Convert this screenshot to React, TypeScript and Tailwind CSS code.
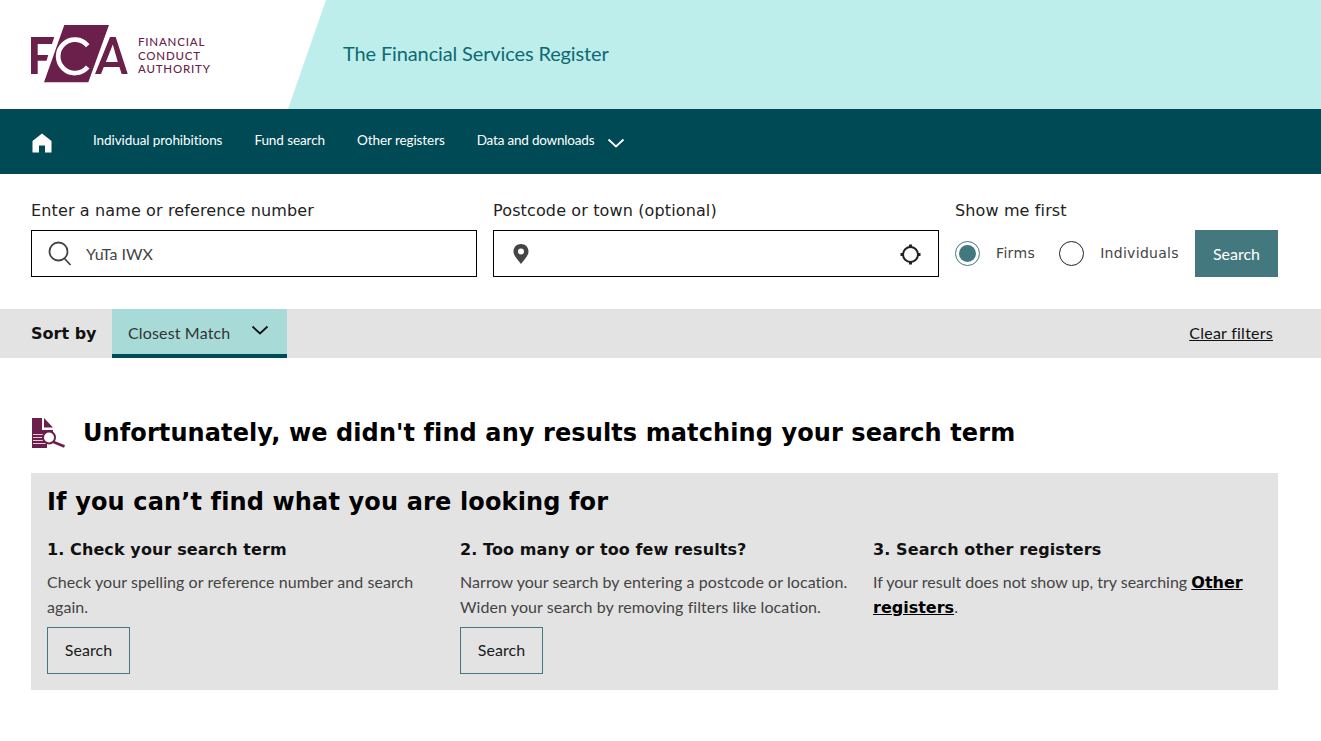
import React from "react";

const LATO = "font-['Lato',sans-serif]";
const VERDANA = "font-['DejaVu_Sans',sans-serif]";

const FcaLogo = () => (
  <svg width="100" height="60" viewBox="0 0 100 60" className="shrink-0 mt-[1px]">
    <path d="M0 12H23.3L21 19H6.7V30H17.3L15.5 35.7H6.7V49H0Z" fill="#6b1f4b" />
    <path d="M33.3 0H78L57.3 57.3H13Z" fill="#6b1f4b" />
    <path d="M56.7 20.7A16.7 16.7 0 1 0 56.7 42" fill="none" stroke="#fff" strokeWidth="4.7" />
    <path
      d="M79 12H84.7L96.7 49H90.7L88.4 42H72.8L70 49H64ZM81.8 19.5L74.9 37H86.8Z"
      fill="#6b1f4b"
      fillRule="evenodd"
    />
  </svg>
);

const Chevron = ({ className }: { className: string }) => (
  <svg width="18" height="10" viewBox="0 0 18 10" fill="none" stroke="currentColor" strokeWidth="1.8" className={className}>
    <path d="M1.5 1.5L9 8.5L16.5 1.5" />
  </svg>
);

const NavLink = ({ children, tight }: { children: React.ReactNode; tight?: boolean }) => (
  <a className={`text-[13.5px] text-white mb-[2px] ${tight ? "tracking-[-0.2px]" : "tracking-[-0.08px]"}`}>
    {children}
  </a>
);

const HelpButton = () => (
  <button className={`w-[83px] h-[47px] border border-[#44787f] pb-[2px] text-[16px] text-[#1a1a1a] ${LATO}`}>
    Search
  </button>
);

const FieldLabel = ({ children }: { children: React.ReactNode }) => (
  <label className={`block text-[16px] leading-[20px] tracking-[0.13px] text-[#222] mb-[9px] ${VERDANA}`}>
    {children}
  </label>
);

const StepTitle = ({ children }: { children: React.ReactNode }) => (
  <h3 className={`text-[16px] leading-[24px] tracking-[0.1px] font-bold text-[#111] mb-[7px] ${VERDANA}`}>
    {children}
  </h3>
);

export default function App() {
  return (
    <div className={`w-full min-h-[741px] bg-white ${LATO}`}>
      <header className="h-[109px] bg-[#bdeeec] flex items-center">
        <div className="w-[326px] h-full bg-white [clip-path:polygon(0_0,100%_0,288px_100%,0_100%)] flex items-center pl-[31px] gap-[7px]">
          <FcaLogo />
          <div className="text-[11.5px] font-medium leading-[13.5px] tracking-[0.8px] text-[#6b1f4b] mt-[2px]">
            <div>FINANCIAL</div>
            <div>CONDUCT</div>
            <div>AUTHORITY</div>
          </div>
        </div>
        <div className="pl-[17px] mb-[4px] text-[20px] tracking-[-0.13px] text-[#0e6a6f]">
          The Financial Services Register
        </div>
      </header>

      <nav className="h-[65px] bg-[#004a56] flex items-center pl-[32px]">
        <svg width="20" height="20" viewBox="0 0 20 20" fill="#fff" className="mr-[41px] mt-[2px]">
          <path d="M10 0.5L19.5 8V19.5H13V12.5H7V19.5H0.5V8Z" />
        </svg>
        <div className="flex items-center gap-[32px]">
          <NavLink>Individual prohibitions</NavLink>
          <NavLink>Fund search</NavLink>
          <NavLink>Other registers</NavLink>
          <div className="flex items-center gap-[13px]">
            <NavLink tight>Data and downloads</NavLink>
            <Chevron className="text-white mt-[2px]" />
          </div>
        </div>
      </nav>

      <section className="h-[135px] pl-[31px] pr-[43px] pt-[27px] flex gap-[16px]">
        <div className="w-[446px]">
          <FieldLabel>Enter a name or reference number</FieldLabel>
          <div className="h-[47px] border border-black flex items-center pl-[16px]">
            <svg width="24" height="25" viewBox="0 0 24 25" fill="none" stroke="#444" strokeWidth="1.8" className="shrink-0">
              <circle cx="10.5" cy="10.5" r="9" />
              <path d="M16.5 17.5L22.5 24" />
            </svg>
            <span className="ml-[14px] text-[16px] text-[#444]">YuTa IWX</span>
          </div>
        </div>
        <div className="w-[446px]">
          <FieldLabel>Postcode or town (optional)</FieldLabel>
          <div className="h-[47px] border border-black flex items-center justify-between pl-[19px] pr-[17px]">
            <svg width="16" height="20" viewBox="0 0 16 20" fill="#444" fillRule="evenodd">
              <path d="M8 0C3.6 0 0.5 3.2 0.5 7.4C0.5 12 5 15.5 8 20C11 15.5 15.5 12 15.5 7.4C15.5 3.2 12.4 0 8 0ZM8 4.6A3 3 0 1 1 8 10.6A3 3 0 1 1 8 4.6Z" />
            </svg>
            <svg width="21" height="21" viewBox="0 0 21 21" fill="none" stroke="#222" className="mt-[1px]">
              <circle cx="10.5" cy="10.5" r="7.5" strokeWidth="2" />
              <path d="M10.5 0.5V3.5M10.5 17.5V20.5M0.5 10.5H3.5M17.5 10.5H20.5" strokeWidth="3" />
            </svg>
          </div>
        </div>
        <div className="flex-1">
          <FieldLabel>Show me first</FieldLabel>
          <div className="flex items-center h-[47px]">
            <span className="w-[25px] h-[25px] rounded-full border border-[#44787f] flex items-center justify-center mb-[1px]">
              <span className="w-[17px] h-[17px] rounded-full bg-[#44787f]" />
            </span>
            <span className={`ml-[16px] text-[14px] text-[#444] tracking-[0.35px] mb-[1px] ${VERDANA}`}>Firms</span>
            <span className="ml-[24px] w-[25px] h-[25px] rounded-full border border-[#222] mb-[1px]" />
            <span className={`ml-[16px] text-[14px] text-[#444] tracking-[0.3px] mb-[1px] ${VERDANA}`}>Individuals</span>
            <button className="ml-auto w-[83px] h-[47px] bg-[#44787f] text-white text-[16px]">Search</button>
          </div>
        </div>
      </section>

      <section className="h-[49px] bg-[#e3e3e3] flex items-center pl-[31px] pr-[48px]">
        <span className={`text-[16px] font-bold text-[#111] w-[81px] ${VERDANA}`}>Sort by</span>
        <div className="w-[175px] h-full bg-[#a8dbd8] border-b-4 border-[#004a56] flex items-center justify-between pl-[16px] pr-[18px]">
          <span className="text-[16px] tracking-[0.15px] text-[#333] mt-[2px]">Closest Match</span>
          <Chevron className="text-[#111] mb-[3px]" />
        </div>
        <a className="ml-auto mb-[2px] text-[16px] tracking-[0.25px] text-[#111] underline">Clear filters</a>
      </section>

      <section className="pt-[60px] pl-[31px] w-[1278px]">
        <div className="flex items-center h-[30px] pl-[1px] gap-[18px]">
          <svg width="33" height="30" viewBox="0 0 33 30" className="shrink-0">
            <path d="M0 0H10V12H21V14H0Z" fill="#6b1f4b" />
            <path d="M12 0L21 9.5H12Z" fill="#6b1f4b" />
            <rect x="0" y="14" width="15" height="16" fill="#6b1f4b" />
            <path d="M1 16.5H14M1 19.5H14M1 22.5H14M1 25.5H14" stroke="#e8c9da" strokeWidth="1" />
            <circle cx="17" cy="19.5" r="6" fill="#fff" stroke="#6b1f4b" strokeWidth="2" />
            <path d="M21.5 24L32.5 28.5" stroke="#6b1f4b" strokeWidth="2.5" />
          </svg>
          <h1 className={`text-[24px] tracking-[0.1px] font-bold text-black ${VERDANA}`}>
            Unfortunately, we didn't find any results matching your search term
          </h1>
        </div>

        <div className="mt-[25px] h-[217px] bg-[#e3e3e3] px-[16px] pt-[12px]">
          <h2 className={`text-[24px] tracking-[0.14px] leading-[34px] font-bold text-black ${VERDANA}`}>
            If you can’t find what you are looking for
          </h2>
          <div className="grid grid-cols-[413px_413px_1fr] mt-[19px] text-[16px] tracking-[0.07px] leading-[25px] text-[#444]">
            <div>
              <StepTitle>1. Check your search term</StepTitle>
              <p>Check your spelling or reference number and search<br />again.</p>
              <div className="mt-[8px]"><HelpButton /></div>
            </div>
            <div>
              <StepTitle>2. Too many or too few results?</StepTitle>
              <p>Narrow your search by entering a postcode or location.<br />Widen your search by removing filters like location.</p>
              <div className="mt-[8px]"><HelpButton /></div>
            </div>
            <div>
              <StepTitle>3. Search other registers</StepTitle>
              <p className="tracking-normal">
                If your result does not show up, try searching{" "}
                <a className={`text-[16px] leading-[20px] font-bold text-black underline ${VERDANA}`}>Other<br />registers</a>.
              </p>
            </div>
          </div>
        </div>
      </section>
    </div>
  );
}
